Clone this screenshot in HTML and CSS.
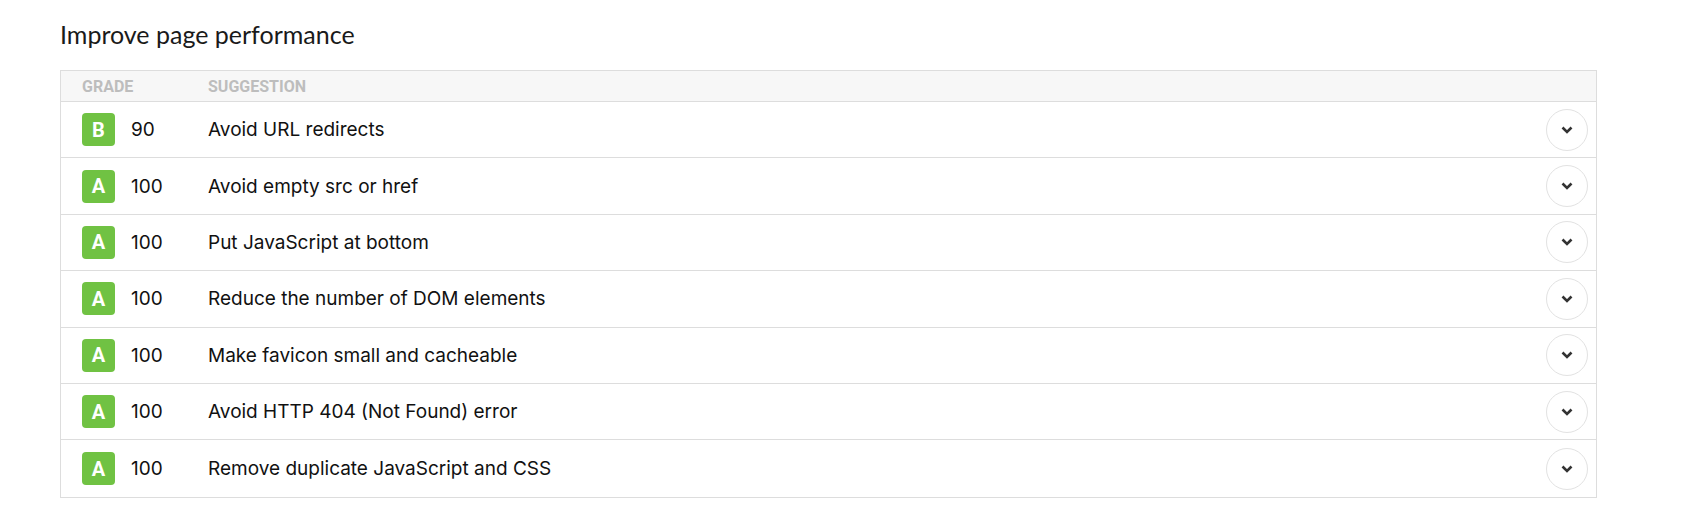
FILE: index.html
```html
<!DOCTYPE html>
<html lang="en">
<head>
    <meta charset="UTF-8">
    <meta name="viewport" content="width=device-width, initial-scale=1.0">
    <title>Improve page performance</title>
    <link rel="stylesheet" href="styles.css">
</head>
<body>
    <div class="container">
        <h2 class="title">Improve page performance</h2>

        <div class="grades">
            <div class="grades-head">
                <div class="col-grade">Grade</div>
                <div class="col-text">Suggestion</div>
            </div>

            <div class="grade-row">
                <div class="col-grade"><span class="badge">B</span><span class="score">90</span></div>
                <div class="col-text">Avoid URL redirects</div>
                <button class="toggle"><svg width="12" height="8" viewBox="0 0 12 8"><polyline points="1.5,1.5 6,6 10.5,1.5" fill="none" stroke="#333" stroke-width="2.6"/></svg></button>
            </div>
            <div class="grade-row">
                <div class="col-grade"><span class="badge">A</span><span class="score">100</span></div>
                <div class="col-text">Avoid empty src or href</div>
                <button class="toggle"><svg width="12" height="8" viewBox="0 0 12 8"><polyline points="1.5,1.5 6,6 10.5,1.5" fill="none" stroke="#333" stroke-width="2.6"/></svg></button>
            </div>
            <div class="grade-row">
                <div class="col-grade"><span class="badge">A</span><span class="score">100</span></div>
                <div class="col-text">Put JavaScript at bottom</div>
                <button class="toggle"><svg width="12" height="8" viewBox="0 0 12 8"><polyline points="1.5,1.5 6,6 10.5,1.5" fill="none" stroke="#333" stroke-width="2.6"/></svg></button>
            </div>
            <div class="grade-row">
                <div class="col-grade"><span class="badge">A</span><span class="score">100</span></div>
                <div class="col-text">Reduce the number of DOM elements</div>
                <button class="toggle"><svg width="12" height="8" viewBox="0 0 12 8"><polyline points="1.5,1.5 6,6 10.5,1.5" fill="none" stroke="#333" stroke-width="2.6"/></svg></button>
            </div>
            <div class="grade-row">
                <div class="col-grade"><span class="badge">A</span><span class="score">100</span></div>
                <div class="col-text">Make favicon small and cacheable</div>
                <button class="toggle"><svg width="12" height="8" viewBox="0 0 12 8"><polyline points="1.5,1.5 6,6 10.5,1.5" fill="none" stroke="#333" stroke-width="2.6"/></svg></button>
            </div>
            <div class="grade-row">
                <div class="col-grade"><span class="badge">A</span><span class="score">100</span></div>
                <div class="col-text">Avoid HTTP 404 (Not Found) error</div>
                <button class="toggle"><svg width="12" height="8" viewBox="0 0 12 8"><polyline points="1.5,1.5 6,6 10.5,1.5" fill="none" stroke="#333" stroke-width="2.6"/></svg></button>
            </div>
            <div class="grade-row">
                <div class="col-grade"><span class="badge">A</span><span class="score">100</span></div>
                <div class="col-text">Remove duplicate JavaScript and CSS</div>
                <button class="toggle"><svg width="12" height="8" viewBox="0 0 12 8"><polyline points="1.5,1.5 6,6 10.5,1.5" fill="none" stroke="#333" stroke-width="2.6"/></svg></button>
            </div>
        </div>
    </div>
</body>
</html>
```

FILE: styles.css
```css
body {
    margin: 0;
    background: white;
    font-family: Inter, "Noto Sans", sans-serif;
    color: #111;
}
.container {
    width: 1537px;
    margin-left: 60px;
}
.title {
    font-family: Lato, sans-serif;
    font-weight: 400;
    font-size: 25px;
    line-height: 1.2;
    color: #1a1a1a;
    margin: 19px 0 21px 0;
}
.grades {
    border: 1px solid #ddd;
}
.grades-head {
    display: flex;
    align-items: center;
    height: 30px;
    background-color: #f7f7f7;
    border-bottom: 1px solid #ddd;
    font-family: Roboto, sans-serif;
    font-weight: 700;
    font-size: 16px;
    text-transform: uppercase;
    color: #bdbdbd;
}
.col-grade {
    width: 126px;
    padding-left: 21px;
    display: flex;
    align-items: center;
}
.col-text {
    flex: 1;
}
.grade-row {
    display: flex;
    align-items: center;
    box-sizing: border-box;
    height: 56.4px;
    border-bottom: 1px solid #ddd;
    font-size: 19px;
}
.grade-row:last-child {
    border-bottom: none;
}
.badge {
    display: inline-flex;
    align-items: center;
    justify-content: center;
    width: 33px;
    height: 33px;
    border-radius: 4px;
    background-color: #70c243;
    color: white;
    font-family: Roboto, sans-serif;
    font-weight: 700;
    font-size: 20px;
}
.score {
    margin-left: 16px;
}
.toggle {
    width: 42px;
    height: 42px;
    margin-right: 8px;
    border: 1px solid #e2e2e2;
    border-radius: 50%;
    background: white;
    display: flex;
    align-items: center;
    justify-content: center;
    padding: 0;
    cursor: pointer;
}
```
